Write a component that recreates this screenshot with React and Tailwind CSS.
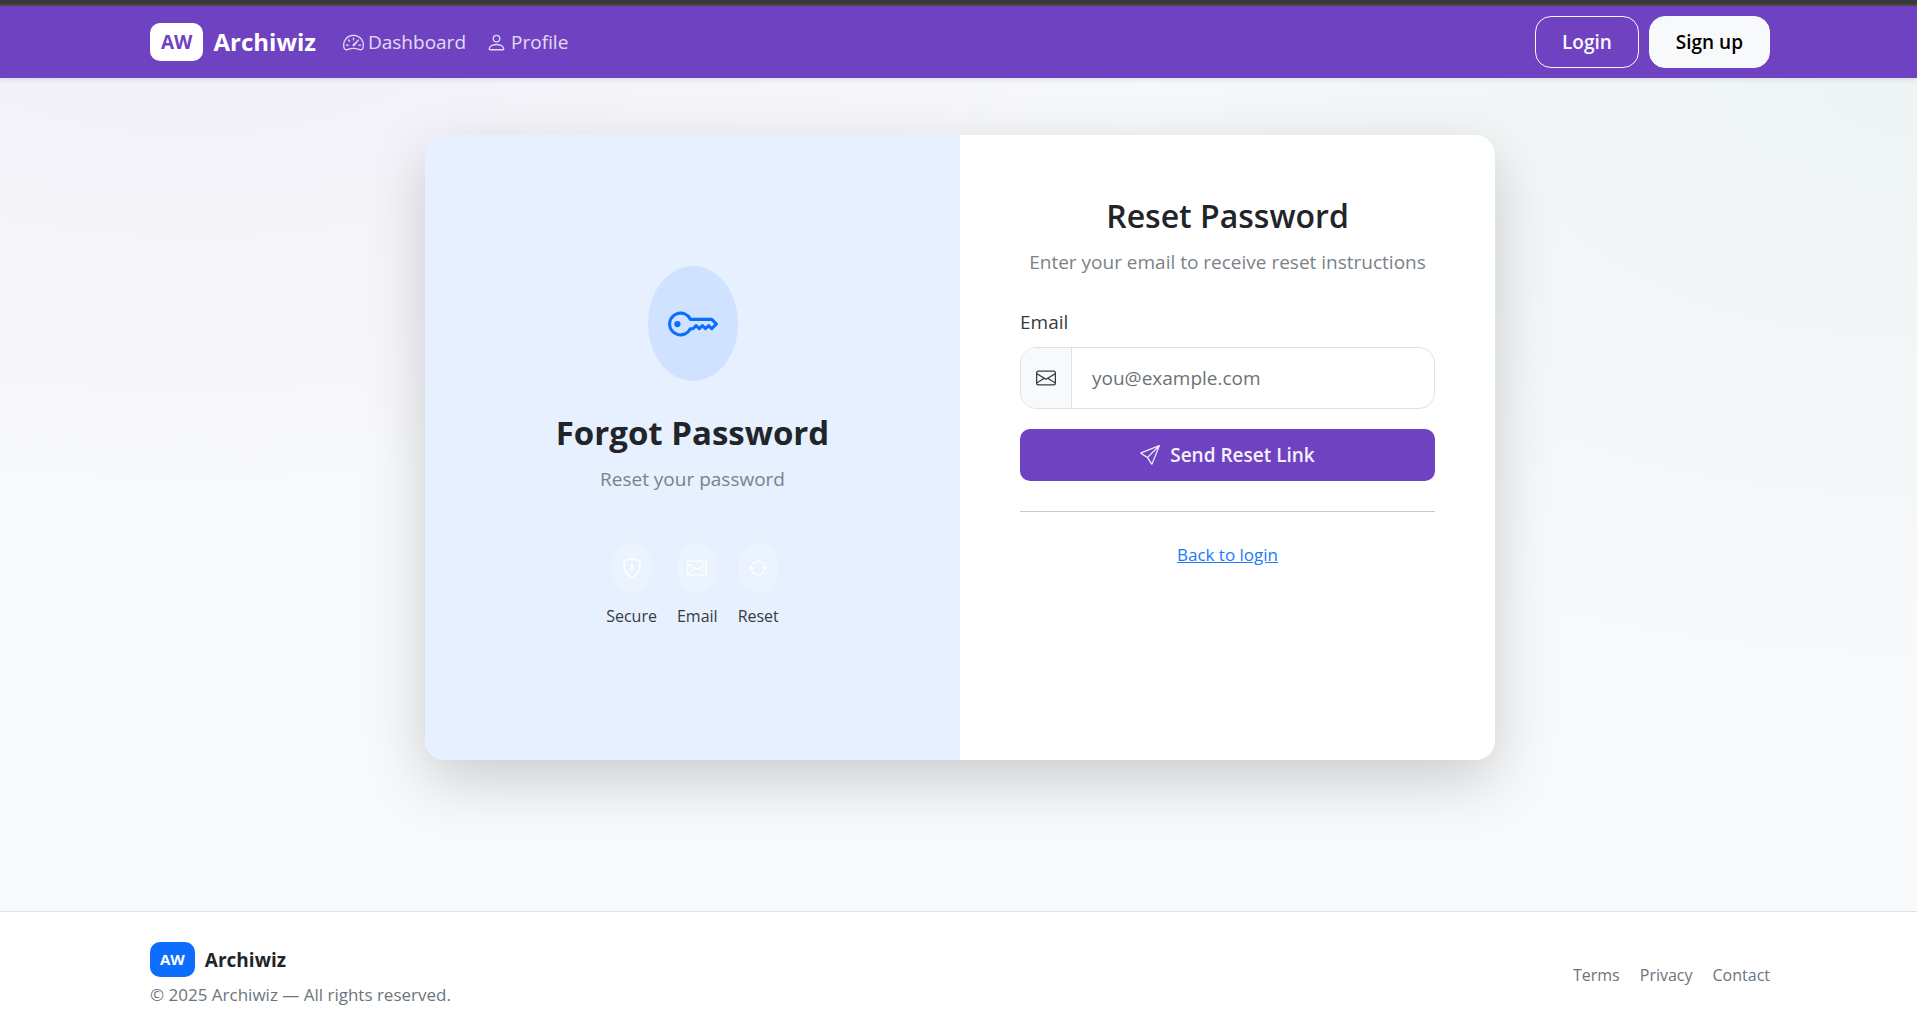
import {
  BsArrowRepeat,
  BsEnvelope,
  BsKey,
  BsPerson,
  BsSend,
  BsShieldLock,
  BsSpeedometer2,
} from "react-icons/bs";

const features = [
  { label: "Secure", Icon: BsShieldLock },
  { label: "Email", Icon: BsEnvelope },
  { label: "Reset", Icon: BsArrowRepeat },
];

function Navbar() {
  return (
    <header className="relative z-10 bg-[#6f42c1] pl-[3px] shadow-[0_2px_5px_rgba(0,0,0,0.09)]">
      <div className="mx-auto flex w-full max-w-[1620px] items-center py-[10px]">
        <a href="#" className="flex items-center gap-[10px]">
          <span className="rounded-[10px] bg-white px-[11px] py-[6px] text-[19px] leading-[26px] font-bold text-[#6f42c1]">
            AW
          </span>
          <span className="text-[24px] leading-[38px] font-bold text-white">Archiwiz</span>
        </a>
        <nav className="ml-[27px] flex items-center gap-5 text-[19px] leading-[30px] text-white/80">
          <a href="#" className="flex items-center gap-1">
            <BsSpeedometer2 className="size-[21px]" />
            Dashboard
          </a>
          <a href="#" className="flex items-center gap-1">
            <BsPerson className="size-[21px]" />
            Profile
          </a>
        </nav>
        <div className="ml-auto flex gap-[10px] text-[19px] leading-[30px] font-semibold">
          <a href="#" className="rounded-[16px] border border-[#f8f9fa] px-[26px] py-[10px] text-[#f8f9fa]">
            Login
          </a>
          <a href="#" className="rounded-[16px] border border-[#f8f9fa] bg-[#f8f9fa] px-[26px] py-[10px] text-black">
            Sign up
          </a>
        </div>
      </div>
    </header>
  );
}

function Intro() {
  return (
    <section className="flex flex-1 flex-col items-center justify-center bg-[#e6f0ff] p-[60px] text-center">
      <div className="flex h-[115px] w-[90px] items-center justify-center rounded-[50%] bg-[#cfe2ff]">
        <BsKey className="size-[50px] text-[#0d6efd]" />
      </div>
      <h2 className="mt-[31px] text-[33px] leading-[42px] font-bold">Forgot Password</h2>
      <p className="mt-[10px] text-[19px] leading-[30px] text-[#7a8288]">Reset your password</p>
      <ul className="mt-[49px] flex gap-5">
        {features.map(({ label, Icon }) => (
          <li key={label} className="flex flex-col items-center gap-[10px]">
            <span className="flex h-[50px] w-[40px] items-center justify-center rounded-[50%] bg-white/20 text-white">
              <Icon className="size-5" />
            </span>
            <span className="text-[16px] leading-[26px] text-[#363b40]">{label}</span>
          </li>
        ))}
      </ul>
    </section>
  );
}

function ResetForm() {
  return (
    <section className="flex-1 bg-white p-[60px]">
      <h1 className="text-center text-[32px] leading-[42px] font-semibold">Reset Password</h1>
      <p className="mt-[10px] text-center text-[19px] leading-[30px] text-[#7a8288]">
        Enter your email to receive reset instructions
      </p>
      <form className="mt-[30px]" onSubmit={(event) => event.preventDefault()}>
        <label htmlFor="email" className="block text-[19px] leading-[30px] text-[#363b40]">
          Email
        </label>
        <div className="mt-[10px] flex h-[62px] overflow-hidden rounded-[16px] border border-[#dee2e6]">
          <span className="flex w-[51px] items-center justify-center border-r border-[#dee2e6] bg-[#f8f9fa]">
            <BsEnvelope className="size-5 text-[#363b40]" />
          </span>
          <input
            id="email"
            type="email"
            placeholder="you@example.com"
            className="min-w-0 flex-1 px-5 text-[19px] outline-none placeholder:text-[#6e7276]"
          />
        </div>
        <button
          type="submit"
          className="mt-5 flex h-[52px] w-full items-center justify-center gap-[10px] rounded-[10px] bg-[#6f42c1] text-[19px] font-semibold text-[#f5f1fb]"
        >
          <BsSend className="size-5" />
          Send Reset Link
        </button>
      </form>
      <hr className="my-[30px] border-[#c8c9ca]" />
      <p className="text-center">
        <a href="#" className="text-[17px] leading-[26px] text-[#2079fb] underline">
          Back to login
        </a>
      </p>
    </section>
  );
}

function Footer() {
  return (
    <footer className="border-t border-[#dee2e6] bg-white pl-[3px]">
      <div className="mx-auto flex w-full max-w-[1620px] items-center justify-between pt-[30px] pb-[27px]">
        <div>
          <div className="flex items-center gap-[10px]">
            <span className="rounded-[10px] bg-[#0d6efd] px-[10px] py-[5px] text-[15px] leading-[25px] font-bold text-white">
              AW
            </span>
            <span className="text-[19px] leading-[30px] font-bold">Archiwiz</span>
          </div>
          <p className="mt-[5px] text-[17px] leading-[26px] text-[#6c757d]">
            © 2025 Archiwiz — All rights reserved.
          </p>
        </div>
        <nav className="flex gap-5 text-[16px] leading-[26px] text-[#6c757d]">
          <a href="#">Terms</a>
          <a href="#">Privacy</a>
          <a href="#">Contact</a>
        </nav>
      </div>
    </footer>
  );
}

export default function App() {
  return (
    <div className="flex min-h-screen flex-col bg-[#f8f9fb] font-['Open_Sans','Noto_Sans',sans-serif] text-[#212529]">
      <div className="h-[6px] border-b-2 border-[#474747] bg-[#3a3a3a]" />
      <Navbar />
      <main className="flex-1 bg-[radial-gradient(1000px_500px_at_10%_-10%,rgba(111,66,193,0.05),transparent),radial-gradient(1000px_600px_at_100%_0%,rgba(25,135,84,0.045),transparent)] pt-[57px] pr-6 pb-[60px] pl-[27px]">
        <div className="mx-auto flex min-h-[625px] w-full max-w-[1070px] overflow-hidden rounded-[20px] shadow-[0_20px_60px_rgba(0,0,0,0.18)]">
          <Intro />
          <ResetForm />
        </div>
      </main>
      <Footer />
    </div>
  );
}
